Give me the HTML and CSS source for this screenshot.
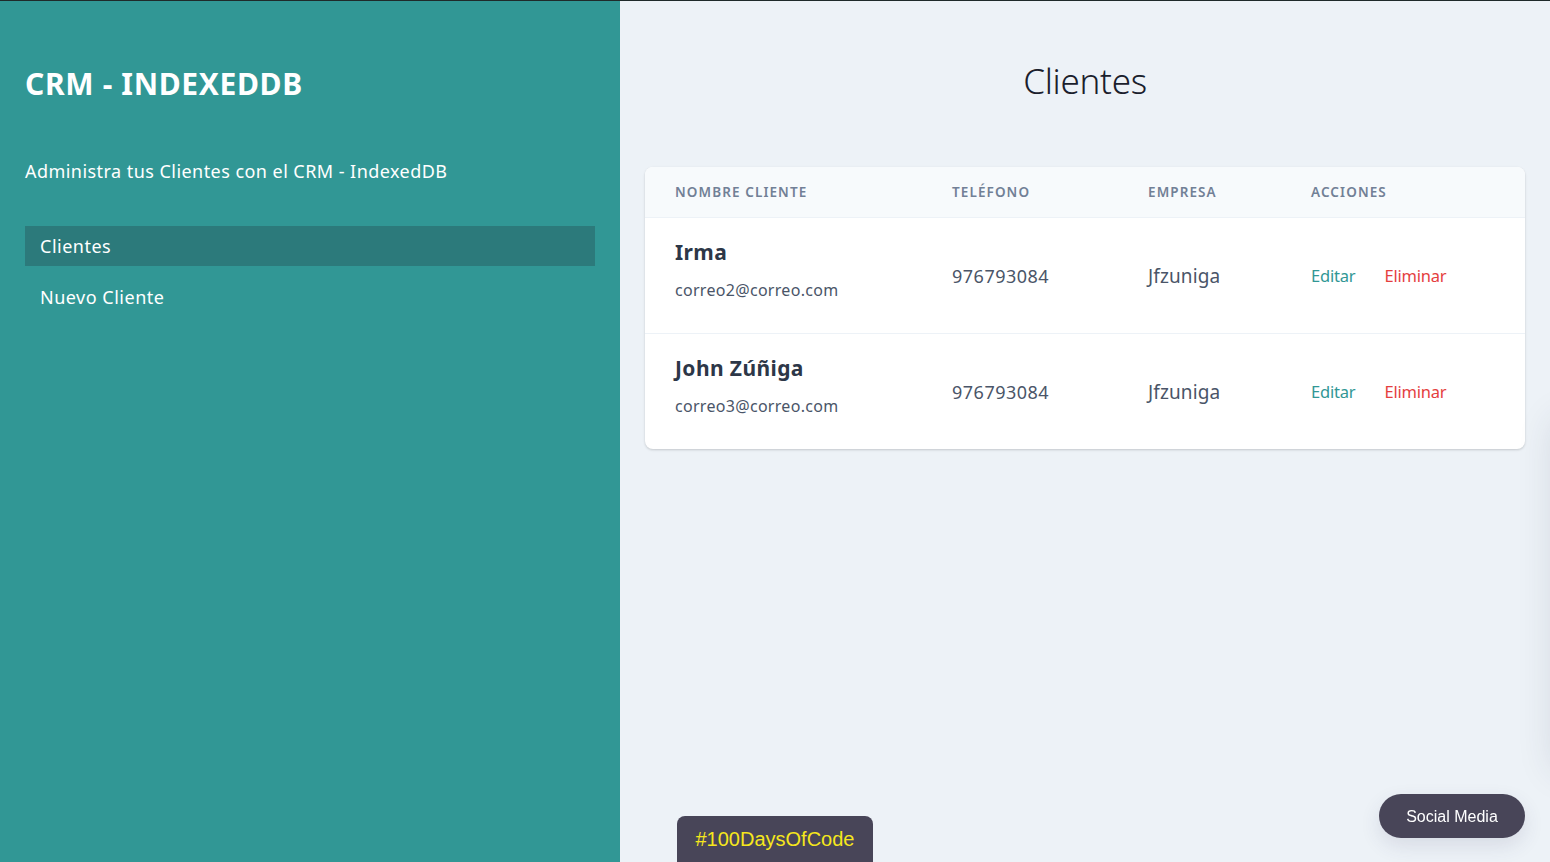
FILE: index.html
```html
<!DOCTYPE html>
<html lang="es">
<head>
<meta charset="utf-8">
<title>CRM - IndexedDB</title>
<link rel="stylesheet" href="styles.css">
</head>
<body>
<div class="layout">
  <aside class="sidebar">
    <h1 class="brand">CRM - IndexedDB</h1>
    <p class="tagline">Administra tus Clientes con el CRM - IndexedDB</p>
    <nav class="nav">
      <a class="nav-link active" href="#">Clientes</a>
      <a class="nav-link" href="#">Nuevo Cliente</a>
    </nav>
  </aside>
  <main class="main">
    <h2 class="page-title">Clientes</h2>
    <div class="card">
      <table class="table">
        <thead>
          <tr>
            <th class="col-name">Nombre Cliente</th>
            <th class="col-phone">Teléfono</th>
            <th class="col-company">Empresa</th>
            <th>Acciones</th>
          </tr>
        </thead>
        <tbody>
          <tr>
            <td>
              <p class="name">Irma</p>
              <p class="email">correo2@correo.com</p>
            </td>
            <td class="phone">976793084</td>
            <td class="company">Jfzuniga</td>
            <td class="actions"><a class="edit" href="#">Editar</a><a class="delete" href="#">Eliminar</a></td>
          </tr>
          <tr>
            <td>
              <p class="name">John Zúñiga</p>
              <p class="email">correo3@correo.com</p>
            </td>
            <td class="phone">976793084</td>
            <td class="company">Jfzuniga</td>
            <td class="actions"><a class="edit" href="#">Editar</a><a class="delete" href="#">Eliminar</a></td>
          </tr>
        </tbody>
      </table>
    </div>
  </main>
</div>
<div class="days-badge">#100DaysOfCode</div>
<div class="social-btn">Social Media</div>
<div class="side-panel"></div>
</body>
</html>
```
FILE: styles.css
```css
* { box-sizing: border-box; }
html, body { margin: 0; padding: 0; height: 100%; }
body {
  font-family: "Noto Sans", "Open Sans", sans-serif;
  background: #edf2f7;
  overflow: hidden;
}
.layout {
  display: flex;
  height: 100vh;
  border-top: 1px solid #1f2a2a;
}
.sidebar {
  width: 40%;
  background: #319795;
  padding: 25px;
  color: #fff;
}
.brand {
  margin: 40px 0 0;
  font-size: 30px;
  line-height: 36px;
  font-weight: 700;
  text-transform: uppercase;
  letter-spacing: 0.65px;
}
.tagline {
  margin: 56px 0 0;
  font-size: 18px;
  line-height: 26px;
  letter-spacing: 0.45px;
}
.nav {
  margin-top: 42px;
  display: flex;
  flex-direction: column;
  gap: 11px;
}
.nav-link {
  display: block;
  color: #fff;
  text-decoration: none;
  font-size: 18px;
  line-height: 24px;
  padding: 8px 15px;
  letter-spacing: 0.5px;
}
.nav-link.active { background: #2c7a7b; }
.main {
  flex: 1;
  padding: 0 25px;
}
.page-title {
  margin: 59px 0 0;
  text-align: center;
  font-weight: 300;
  font-size: 35px;
  line-height: 42px;
  color: #1a202c;
  letter-spacing: -0.3px;
}
.card {
  margin-top: 65px;
  background: #fff;
  border-radius: 8px;
  box-shadow: 0 1px 3px rgba(0,0,0,0.12), 0 1px 2px rgba(0,0,0,0.06);
  overflow: hidden;
}
.table {
  width: 100%;
  border-collapse: collapse;
}
.table th {
  background: #f7fafc;
  text-align: left;
  font-size: 13.5px;
  line-height: 18px;
  font-weight: 600;
  color: #718096;
  text-transform: uppercase;
  letter-spacing: 1.1px;
  padding: 16px 30px 16px;
  border-bottom: 1px solid #edf2f7;
}
.col-name { width: 277px; }
.col-phone { width: 196px; }
.col-company { width: 163px; }
.table td {
  padding: 20px 30px;
  vertical-align: middle;
  border-bottom: 1px solid #edf2f7;
  color: #4a5568;
}
.table tbody tr:last-child td { border-bottom: none; }
.name {
  margin: 0;
  font-size: 21px;
  line-height: 28px;
  font-weight: 700;
  color: #2d3748;
  letter-spacing: 0.4px;
}
.email {
  margin: 12px 0 11px;
  font-size: 16px;
  line-height: 24px;
  color: #4a5568;
  letter-spacing: 0.3px;
}
.phone {
  font-size: 18px;
  letter-spacing: 0.5px;
}
.company {
  font-size: 19px;
  color: #5a6678;
  letter-spacing: 0.1px;
}
.actions { font-size: 16.5px; letter-spacing: -0.2px; }
.actions a { text-decoration: none; }
.edit { color: #319795; margin-right: 29px; }
.delete { color: #e53e3e; }
.days-badge {
  position: fixed;
  left: 677px;
  top: 816px;
  width: 196px;
  height: 60px;
  background: #484558;
  color: #f6e71c;
  font-family: "Liberation Sans", Arial, sans-serif;
  font-size: 20px;
  line-height: 46px;
  text-align: center;
  border-radius: 8px 8px 0 0;
}
.social-btn {
  position: fixed;
  right: 25px;
  bottom: 24px;
  width: 146px;
  height: 44px;
  background: #484558;
  color: #fff;
  font-family: "Liberation Sans", Arial, sans-serif;
  font-size: 16px;
  line-height: 46px;
  text-align: center;
  border-radius: 22px;
  box-shadow: 0 8px 20px rgba(60,60,100,0.12);
}
.side-panel {
  position: fixed;
  right: -305px;
  top: 420px;
  width: 300px;
  height: 350px;
  box-shadow: 0 0 36px rgba(40,50,80,0.14);
  background: #edf2f7;
}
```
